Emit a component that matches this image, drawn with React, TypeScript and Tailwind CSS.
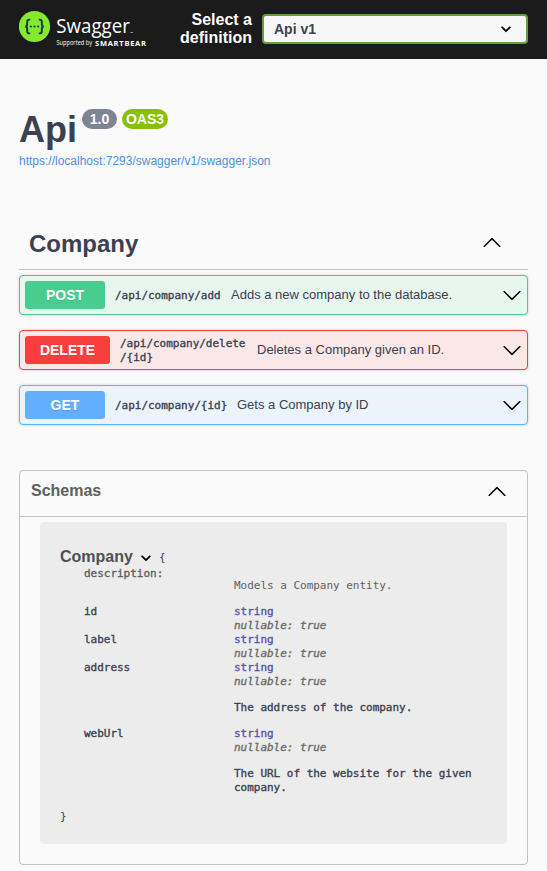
import React from "react";

const mono = "font-['DejaVu_Sans_Mono',monospace] text-[11px] leading-[14px] tracking-[-0.02px]";
const medium = "[-webkit-text-stroke:0.35px_currentColor]";

function DownArrow() {
  return (
    <svg width="20" height="20" viewBox="0 0 20 20" className="shrink-0">
      <path d="M17.418 6.109c.272-.268.709-.268.979 0s.271.701 0 .969l-7.908 7.83c-.27.268-.707.268-.979 0l-7.908-7.83c-.27-.268-.27-.701 0-.969.271-.268.709-.268.979 0L10 13.25l7.418-7.141z" />
    </svg>
  );
}

function UpArrow() {
  return (
    <svg width="20" height="20" viewBox="0 0 20 20" className="shrink-0">
      <path d="M17.418 13.908c.272.281.709.281.979 0s.271-.701 0-.969l-7.908-7.83c-.27-.268-.707-.268-.979 0l-7.908 7.83c-.27.268-.27.701 0 .969.271.268.709.268.979 0L10 6.767l7.418 7.141z" />
    </svg>
  );
}

function Caret() {
  return (
    <svg width="20" height="20" viewBox="0 0 20 20" className="shrink-0" stroke="#000" strokeWidth=".4">
      <path d="M13.418 7.859c.271-.268.709-.268.978 0 .27.268.272.701 0 .969l-3.908 3.83c-.27.268-.707.268-.979 0l-3.908-3.83c-.27-.267-.27-.701 0-.969.271-.268.709-.268.978 0L10 11l3.418-3.141z" />
    </svg>
  );
}

function Logo() {
  return (
    <svg width="130" height="40" viewBox="0 0 130 40" className="shrink-0">
      <circle cx="15.5" cy="16.5" r="15.6" fill="#85ea2d" />
      <g fill="none" stroke="#173647" strokeWidth="1.9">
        <path d="M11.2 9.6h-.8q-2.2 0-2.2 2.2v2.1q0 2.6-2 2.6q2 0 2 2.6v2.1q0 2.2 2.2 2.2h.8" />
        <path d="M19.8 9.6h.8q2.2 0 2.2 2.2v2.1q0 2.6 2 2.6q-2 0-2 2.6v2.1q0 2.2-2.2 2.2h-.8" />
      </g>
      <g fill="#173647">
        <circle cx="11.8" cy="16.5" r="1.1" />
        <circle cx="15.5" cy="16.5" r="1.1" />
        <circle cx="19.2" cy="16.5" r="1.1" />
      </g>
      <g fill="#fff">
        <text x="37.3" y="22.8" textLength="73.5" lengthAdjust="spacingAndGlyphs" className="font-['Open_Sans',sans-serif] text-[20px]">Swagger</text>
        <rect x="111.5" y="22" width="2.5" height="1" opacity=".55" />
        <text x="37.5" y="35.3" textLength="35.5" lengthAdjust="spacingAndGlyphs" className="font-['Open_Sans',sans-serif] text-[6.5px]">Supported by</text>
        <text x="76" y="35.5" textLength="51" className="font-['Open_Sans',sans-serif] text-[7.5px] font-bold">SMARTBEAR</text>
      </g>
    </svg>
  );
}

type Operation = {
  method: string;
  path: React.ReactNode;
  text: string;
  box: string;
  badge: string;
  pathBox: string;
};

const operations: Operation[] = [
  { method: "POST", path: "/api/company/add", text: "Adds a new company to the database.", box: "border-[#49cc90] bg-[#e8f6f0]", badge: "w-[80px] bg-[#49cc90]", pathBox: "w-[106px]" },
  { method: "DELETE", path: <>/api/company/delete<br />/{"{id}"}</>, text: "Deletes a Company given an ID.", box: "border-[#f93e3e] bg-[#fae7e7]", badge: "w-[85px] bg-[#f93e3e]", pathBox: "w-[127px]" },
  { method: "GET", path: "/api/company/{id}", text: "Gets a Company by ID", box: "border-[#61affe] bg-[#ebf3fb]", badge: "w-[80px] bg-[#61affe]", pathBox: "w-[112px]" },
];

const properties = [
  { name: "id" },
  { name: "label" },
  { name: "address", note: <>The address of the company.</> },
  { name: "webUrl", note: <>The URL of the website for the given<br />company.</> },
];

export default function App() {
  return (
    <div className="h-[871px] w-[547px] overflow-hidden bg-[#fafafa] font-['Liberation_Sans',Arial,sans-serif] text-[#3b4151]">
      <header className="flex h-[59px] items-start bg-[#1b1b1b] pl-[19px] pt-[10px]">
        <Logo />
        <div className="mt-[1px] w-[103px] text-right text-[16px] font-bold leading-[18px] text-white">
          Select a<br />definition
        </div>
        <div className="ml-[10px] mt-[4px] flex h-[30px] w-[266px] items-center justify-between rounded-[4px] border-2 border-[#62a03f] bg-[#f7f7f7] pl-[10px] pr-[10px] text-[14px] font-bold">
          <span>Api v1</span>
          <Caret />
        </div>
      </header>

      <main className="px-[19px]">
        <div className="flex h-[93px] items-start pt-[50px]">
          <h1 className="w-[58px] text-[36px] font-bold leading-[42px]">Api</h1>
          <span className="ml-[5px] h-[20px] w-[35px] rounded-full bg-[#7d8492] text-center text-[14px] font-bold leading-[20px] text-white">1.0</span>
          <span className="ml-[5px] h-[20px] w-[46px] rounded-full bg-[#89bf04] text-center text-[14px] font-bold leading-[20px] text-white">OAS3</span>
        </div>
        <a className="block h-[66px] whitespace-nowrap text-[12px] leading-[18px] text-[#4990e2]">https://localhost:7293/swagger/v1/swagger.json</a>

        <div className="flex h-[52px] items-center justify-between border-b border-[#3b4151]/30 pl-[10px] pr-[26px]">
          <h2 className="text-[24px] font-bold leading-[28px]">Company</h2>
          <div className="pb-[2px]"><UpArrow /></div>
        </div>

        <div className="mt-[5px] flex flex-col gap-[15px]">
          {operations.map((op) => (
            <div key={op.method} className={`flex h-[40px] items-center rounded-[4px] border pl-[5px] pr-[5px] shadow-[0_0_3px_rgba(0,0,0,0.19)] ${op.box}`}>
              <span className={`h-[28px] shrink-0 rounded-[3px] text-center text-[14px] font-bold leading-[28px] text-white [text-shadow:0_1px_0_rgba(0,0,0,0.1)] ${op.badge}`}>{op.method}</span>
              <span className={`ml-[10px] shrink-0 whitespace-nowrap pt-[2px] ${medium} ${mono} ${op.pathBox}`}>{op.path}</span>
              <span className="ml-[10px] grow whitespace-nowrap pb-[2px] text-[13px] leading-[15px]">{op.text}</span>
              <DownArrow />
            </div>
          ))}
        </div>

        <section className="mt-[45px] h-[395px] rounded-[4px] border border-[#3b4151]/30">
          <div className="flex h-[46px] items-center justify-between border-b border-[#3b4151]/30 pl-[11px] pr-[20px]">
            <h4 className="pb-[5px] text-[16px] font-bold leading-[18px] text-[#606060]">Schemas</h4>
            <div className="pb-[3px]"><UpArrow /></div>
          </div>
          <div className={`mx-[20px] mt-[5px] h-[322px] rounded-[4px] bg-[#ececec] pl-[20px] pt-[25px] ${mono}`}>
            <div className="flex h-[20px] items-start">
              <span className="w-[76px] pt-[1px] font-['Liberation_Sans',Arial,sans-serif] text-[16px] font-bold leading-[18px] tracking-normal text-[#505050]">Company</span>
              <div className="pt-[1px]"><Caret /></div>
              <span className="pl-[3px] pt-[4px]">{"{"}</span>
            </div>
            <div className="pl-[24px]">
              <div className={`text-[#606060] ${medium}`}>description:</div>
              <div className="-mt-[2px] mb-[12px] pl-[150px] text-[#606060]">Models a Company entity.</div>
              {properties.map((p) => (
                <div key={p.name} className={`flex ${medium}`}>
                  <span className="w-[150px]">{p.name}</span>
                  <div>
                    <div className="text-[#5555aa]">string</div>
                    <div className="italic text-[#6b6b6b]">nullable: true</div>
                    {p.note && <div className="my-[12px] whitespace-nowrap">{p.note}</div>}
                  </div>
                </div>
              ))}
            </div>
            <div className="mt-[3px]">{"}"}</div>
          </div>
        </section>
      </main>
    </div>
  );
}
